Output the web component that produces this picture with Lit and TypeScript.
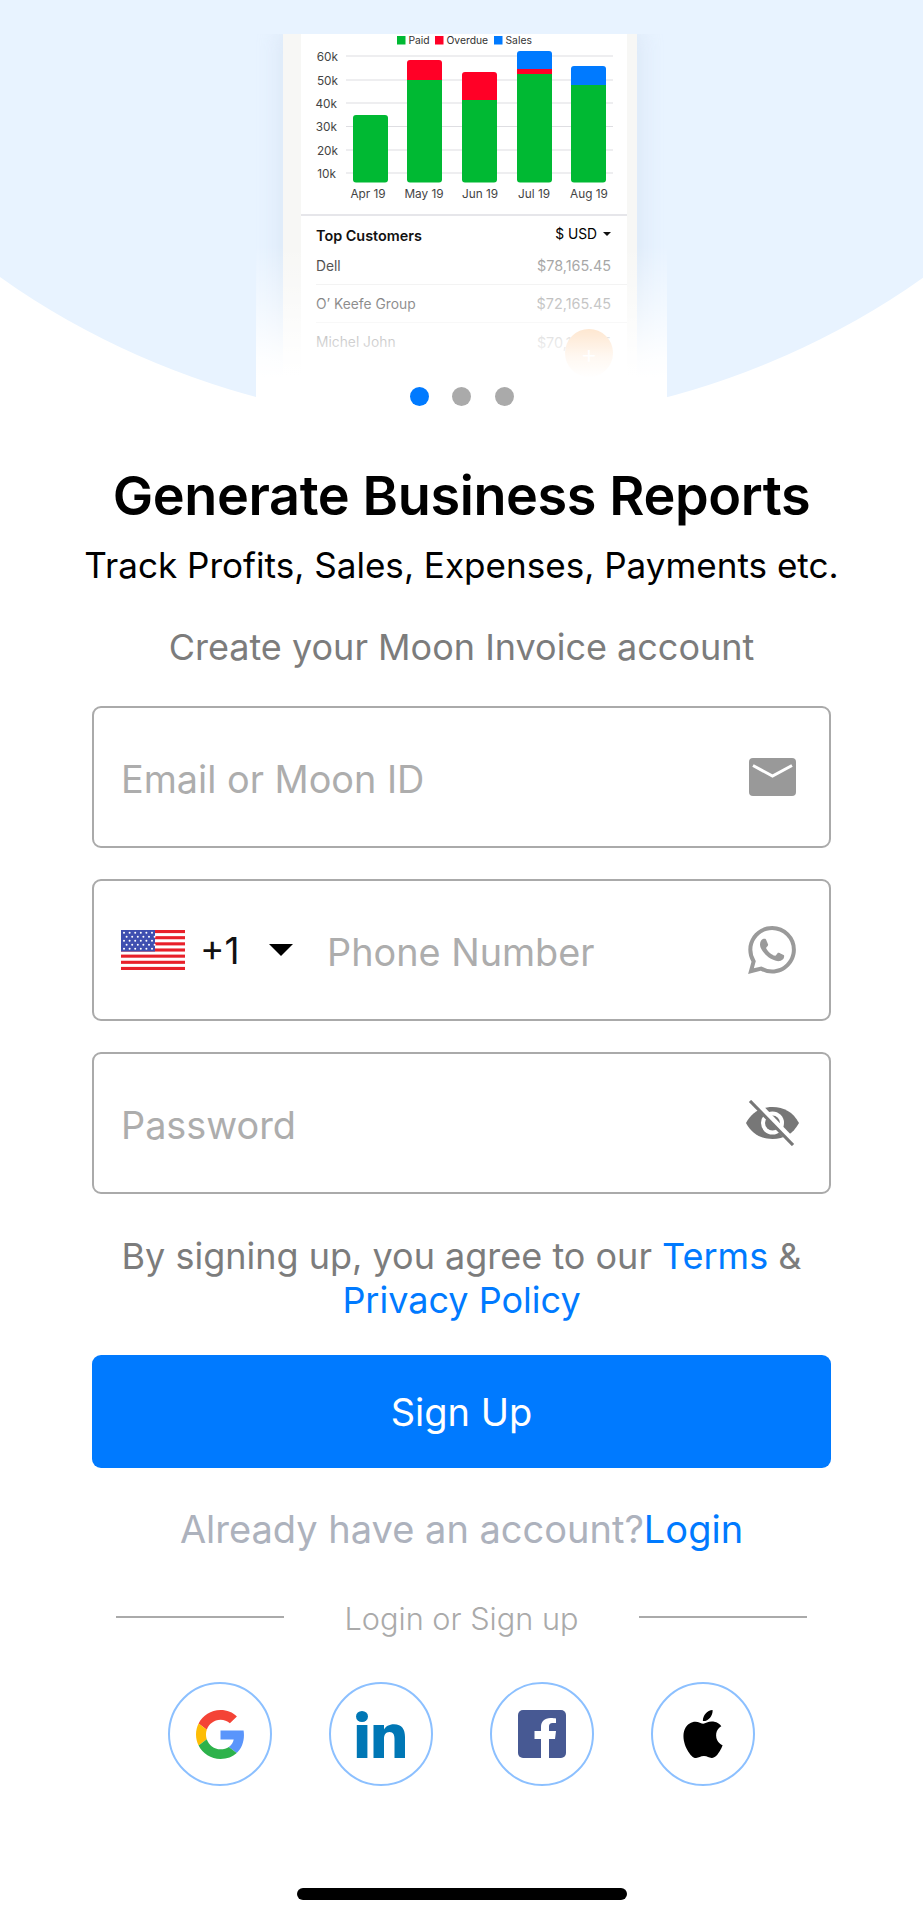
import { LitElement, html, css, svg } from "lit";
import { customElement } from "lit/decorators.js";

const BARS: [number, [number, string][]][] = [
  [353, [[115, "#00b933"]]],
  [407, [[60, "#ff0026"], [80, "#00b933"]]],
  [462, [[72, "#ff0026"], [100, "#00b933"]]],
  [517, [[51, "#007aff"], [69, "#ff0026"], [74, "#00b933"]]],
  [571, [[66, "#007aff"], [85, "#00b933"]]],
];
const GRID: [number, string, number][] = [
  [56, "60k", 338], [80, "50k", 338], [103, "40k", 337], [126.5, "30k", 337], [150, "20k", 338], [173, "10k", 336],
];
const MONTHS: [number, string][] = [[368, "Apr 19"], [424, "May 19"], [480, "Jun 19"], [534, "Jul 19"], [589, "Aug 19"]];
const LEGEND: [number, string, string][] = [[397, "#00b933", "Paid"], [435, "#ff0026", "Overdue"], [494, "#007aff", "Sales"]];

function chart() {
  return html`<svg class="chart" viewBox="301 34 326 181" width="326" height="181">
    ${LEGEND.map(([x, c, t]) => svg`<rect x=${x} y="36" width="8.5" height="8.5" fill=${c}></rect>
      <text x=${x + 11.5} y="44" class="lg">${t}</text>`)}
    ${GRID.map(([y, t, x]) => svg`<line x1="346" x2="613" y1=${y} y2=${y} stroke="#dedee2" stroke-width="1.2"></line>
      <text x=${x} y=${y + 4.5} text-anchor="end" class="ax">${t}</text>`)}
    ${BARS.map(([x, segs]) => {
      const top = segs[0][0];
      return svg`<clipPath id=${"c" + x}><rect x=${x} y=${top} width="35" height=${182.5 - top} rx="3"></rect></clipPath>
      <g clip-path=${`url(#c${x})`}>
        ${segs.map(([y, c], i) => {
          const end = i + 1 < segs.length ? segs[i + 1][0] : 183;
          return svg`<rect x=${x} y=${y} width="35" height=${end - y} fill=${c}></rect>`;
        })}
      </g>`;
    })}
    ${MONTHS.map(([x, t]) => svg`<text x=${x} y="197.5" text-anchor="middle" class="ax">${t}</text>`)}
  </svg>`;
}

const flag = html`<svg class="flag" viewBox="0 0 64 40" width="64" height="40">
  <rect width="64" height="40" fill="#fff"></rect>
  ${[0, 6.15, 12.3, 18.45, 24.6, 30.75, 36.9].map((y) => svg`<rect y=${y} width="64" height="3.1" fill="#e8202a"></rect>`)}
  <rect width="34" height="21.5" fill="#3f4fb0"></rect>
  ${[0, 1, 2, 3, 4].map((r) => [0, 1, 2, 3, 4, 5].map((c) => svg`<circle cx=${3 + c * 5.6 + (r % 2 ? 2.6 : 0)} cy=${2.8 + r * 4} r="1" fill="#fff"></circle>`))}
</svg>`;

const mail = html`<svg viewBox="0 0 47 38" width="47" height="38">
  <rect width="47" height="38" rx="4" fill="#999"></rect>
  <path d="M4 7.500 23.500 18 43 7.500" fill="none" stroke="#fff" stroke-width="3"></path>
</svg>`;

const whatsapp = html`<svg viewBox="0 0 24 24" width="48" height="48" fill="#9a9a9a">
  <path d="M17.472 14.382c-.297-.149-1.758-.867-2.03-.967-.273-.099-.471-.148-.67.15-.197.297-.767.966-.94 1.164-.173.199-.347.223-.644.075-.297-.15-1.255-.463-2.39-1.475-.883-.788-1.48-1.761-1.653-2.059-.173-.297-.018-.458.13-.606.134-.133.298-.347.446-.52.149-.174.198-.298.298-.497.099-.198.05-.371-.025-.52-.075-.149-.669-1.612-.916-2.207-.242-.579-.487-.5-.669-.51-.173-.008-.371-.01-.57-.01-.198 0-.52.074-.792.372-.272.297-1.04 1.016-1.04 2.479 0 1.462 1.065 2.875 1.213 3.074.149.198 2.096 3.2 5.077 4.487.709.306 1.262.489 1.694.625.712.227 1.36.195 1.871.118.571-.085 1.758-.719 2.006-1.413.248-.694.248-1.289.173-1.413-.074-.124-.272-.198-.57-.347m-5.421 7.403h-.004a9.87 9.87 0 01-5.031-1.378l-.361-.214-3.741.982.998-3.648-.235-.374a9.86 9.86 0 01-1.51-5.26c.001-5.45 4.436-9.884 9.888-9.884 2.64 0 5.122 1.03 6.988 2.898a9.825 9.825 0 012.893 6.994c-.003 5.45-4.437 9.884-9.885 9.884m8.413-18.297A11.815 11.815 0 0012.05 0C5.495 0 .16 5.335.157 11.892c0 2.096.547 4.142 1.588 5.945L.057 24l6.305-1.654a11.882 11.882 0 005.683 1.448h.005c6.554 0 11.89-5.335 11.893-11.893a11.821 11.821 0 00-3.48-8.413z"></path>
</svg>`;

const eye = html`<svg viewBox="0 0 53 46" width="53" height="46">
  <path d="M0 23C6 12 15 7 26.500 7S47 12 53 23C47 34 38 39 26.500 39S6 34 0 23Z" fill="#777"></path>
  <circle cx="26.500" cy="23" r="11.500" fill="#fff"></circle>
  <circle cx="26.500" cy="23" r="7.500" fill="#777"></circle>
  <path d="M6 -1 47 42" stroke="#fff" stroke-width="7"></path>
  <path d="M4 1 47 45" stroke="#777" stroke-width="3.200"></path>
</svg>`;

const google = html`<svg viewBox="0 0 48 48" width="49" height="49">
  <path fill="#f44336" d="M24 9.5c3.54 0 6.71 1.22 9.21 3.6l6.85-6.85C35.9 2.38 30.47 0 24 0 14.62 0 6.51 5.38 2.56 13.22l7.98 6.19C12.43 13.72 17.74 9.5 24 9.5z"></path>
  <path fill="#5a95fb" d="M46.98 24.55c0-1.57-.15-3.09-.38-4.55H24v9.02h12.94c-.58 2.96-2.26 5.48-4.78 7.18l7.73 6c4.51-4.18 7.09-10.36 7.09-17.65z"></path>
  <path fill="#fdbd05" d="M10.53 28.59c-.48-1.45-.76-2.99-.76-4.59s.27-3.14.76-4.59l-7.98-6.19C.92 16.46 0 20.12 0 24c0 3.88.92 7.54 2.56 10.78l7.97-6.19z"></path>
  <path fill="#2db24b" d="M24 48c6.48 0 11.93-2.13 15.89-5.81l-7.73-6c-2.15 1.45-4.92 2.3-8.16 2.3-6.26 0-11.57-4.22-13.47-9.91l-7.98 6.19C6.51 42.62 14.62 48 24 48z"></path>
</svg>`;

const linkedin = html`<svg class="shift" viewBox="0 0 49 47" width="49" height="47" fill="#0077b5">
  <ellipse cx="6" cy="5.500" rx="6" ry="5.500"></ellipse>
  <rect x="0.800" y="14" width="10.600" height="33"></rect>
  <path d="M17.500 14H28v4.500c1.500-2.700 5-5.200 10-5.200C46 13.300 49 18.500 49 26V47H38.500V28c0-4-1-7-5-7s-5.500 3-5.500 7V47H17.500Z"></path>
</svg>`;

const facebook = html`<svg viewBox="0 0 48 48" width="48" height="48">
  <rect width="48" height="48" rx="5" fill="#475993"></rect>
  <path d="M31 48V29h6l1-8h-7v-4.500c0-2.300 1-3.500 3.500-3.500H38V8.500C37 8.300 35 8 32.500 8 26.500 8 23 11.500 23 17v4h-6.500v8H23v19Z" fill="#fff"></path>
</svg>`;

const apple = html`<svg viewBox="0 0 24 24" width="48" height="48" fill="#000">
  <path d="M12.152 6.896c-.948 0-2.415-1.078-3.96-1.04-2.04.027-3.91 1.183-4.961 3.014-2.117 3.675-.546 9.103 1.519 12.09 1.013 1.454 2.208 3.09 3.792 3.039 1.52-.065 2.09-.987 3.935-.987 1.831 0 2.35.987 3.96.948 1.637-.026 2.676-1.48 3.676-2.948 1.156-1.688 1.636-3.325 1.662-3.415-.039-.013-3.182-1.221-3.22-4.857-.026-3.04 2.48-4.494 2.597-4.559-1.429-2.09-3.623-2.324-4.39-2.376-2-.156-3.675 1.09-4.61 1.09zM15.53 3.83c.843-1.012 1.4-2.427 1.245-3.83-1.207.052-2.662.805-3.532 1.818-.78.896-1.454 2.338-1.273 3.714 1.338.104 2.715-.688 3.559-1.701"></path>
</svg>`;

@customElement("app-root")
export class AppRoot extends LitElement {
  static styles = css`
    :host { display: block; width: 923px; height: 1920px; background: #fff; font-family: Inter, "Noto Sans", sans-serif; color: #000; overflow: hidden; position: relative; }
    * { box-sizing: border-box; }
    .hero { position: relative; height: 427px; overflow: hidden; }
    .sky { position: absolute; left: -338.5px; top: -1176px; width: 1600px; height: 1600px; border-radius: 50%; background: #e8f3ff; }
    .phone { position: absolute; left: 283px; top: 34px; width: 354px; height: 362px; background: #f7f7f5; padding: 0 10px 0 18px; box-shadow: 0 0 20px 4px rgba(190, 205, 225, .3); clip-path: inset(0 -40px 0 -40px); }
    .screen { background: #fff; height: 100%; display: flex; flex-direction: column; }
    .chart { display: block; flex: none; }
    .chart .lg { font-size: 10.3px; fill: #333; font-family: Inter, sans-serif; }
    .chart .ax { font-size: 11.8px; fill: #444; font-family: Inter, sans-serif; }
    .sep { height: 2px; background: #e6e6ea; flex: none; margin-top: -1px; }
    .customers { padding: 8px 0 0 15px; font-size: 13.8px; }
    .chead { display: flex; justify-content: space-between; align-items: center; height: 23px; padding-right: 16px; }
    .chead b { font-weight: 600; font-size: 14.4px; color: #111; }
    .usd { display: flex; align-items: center; gap: 6px; font-size: 13.8px; margin-top: -3px; }
    .usd i { width: 0; height: 0; border: 4px solid transparent; border-top: 4.5px solid #111; border-bottom: 0; }
    .row { display: flex; justify-content: space-between; align-items: center; height: 38px; padding-right: 16px; border-bottom: 1.5px solid #eee; color: #333; }
    .row span:last-child { color: #999; font-size: 14.4px; }
    .row:last-child { border: 0; }
    .fab { position: absolute; left: 282px; top: 295px; width: 48px; height: 48px; border-radius: 50%; background: #fdb977; color: #fff; display: flex; align-items: center; justify-content: center; font-size: 26px; font-weight: 300; }
    .fade { position: absolute; left: 256px; top: 245px; width: 411px; height: 151px; background: linear-gradient(to bottom, rgba(255,255,255,0) 0%, rgba(255,255,255,.45) 40%, rgba(255,255,255,.9) 74%, #fff 88%); }
    .fade2 { position: absolute; left: 256px; top: 396px; width: 411px; height: 31px; background: #fff; }
    .dots { position: absolute; left: 0; right: 0; top: 387px; display: flex; justify-content: center; gap: 24px; }
    .dots i { width: 19px; height: 19px; border-radius: 50%; background: #aaa; }
    .dots i:first-child { background: #007aff; margin-right: -1px; }
    .copy { text-align: center; display: flex; flex-direction: column; align-items: center; }
    h1 { margin: 36px 0 0; font-size: 54px; line-height: 66px; font-weight: 600; letter-spacing: -.4px; }
    .sub { font-size: 35.1px; line-height: 44px; margin-top: 14px; }
    .create { font-size: 36px; line-height: 44px; color: #7c7c7c; margin-top: 38px; }
    .form { margin: 37px 92px 0; display: flex; flex-direction: column; gap: 31px; }
    .field { height: 142px; border: 2px solid #aaa; border-radius: 9px; display: flex; align-items: center; padding: 0 33px 0 27px; font-size: 37.8px; color: #adadad; }
    .field .ph { flex: 1; padding-top: 4px; }
    .code { color: #111; margin-left: 15px; font-size: 37px; width: 69px; padding-top: 1px; }
    .flag { flex: none; }
    .caret { width: 0; height: 0; border-left: 12px solid transparent; border-right: 12px solid transparent; border-top: 12px solid #000; margin-right: 34px; flex: none; }
    .ic { flex: none; display: flex; }
    .ic.wide { margin-right: -3px; }
    .terms { text-align: center; font-size: 36px; line-height: 44px; color: #7c7c7c; margin-top: 40px; }
    a { color: #007aff; text-decoration: none; }
    .btn { margin: 33px 92px 0; height: 113px; background: #007aff; color: #fff; border-radius: 9px; display: flex; align-items: center; justify-content: center; font-size: 38px; }
    .have { text-align: center; font-size: 38px; line-height: 46px; color: #adb2bd; margin-top: 38px; }
    .or { display: flex; align-items: center; justify-content: space-between; margin: 45px 116px 0; font-size: 30.7px; font-weight: 300; color: #aaa; height: 40px; }
    .or span { padding-top: 3px; }
    .or i { width: 168px; height: 2px; background: #aaa; }
    .social { display: flex; justify-content: center; gap: 57px; margin-top: 45px; }
    .social div { width: 104px; height: 104px; border-radius: 50%; border: 2.5px solid #8cc0ff; display: flex; align-items: center; justify-content: center; }
    .shift { margin-left: -1px; }
    .home { position: absolute; left: 297px; top: 1888px; width: 330px; height: 12px; border-radius: 6px; background: #000; }
  `;

  render() {
    return html`
      <div class="hero">
        <div class="sky"></div>
        <div class="phone">
          <div class="screen">
            ${chart()}
            <div class="sep"></div>
            <div class="customers">
              <div class="chead"><b>Top Customers</b><span class="usd">$ USD <i></i></span></div>
              <div class="row"><span>Dell</span><span>$78,165.45</span></div>
              <div class="row"><span>O’ Keefe Group</span><span>$72,165.45</span></div>
              <div class="row"><span>Michel John</span><span>$70,165.45</span></div>
            </div>
          </div>
          <div class="fab">+</div>
        </div>
        <div class="fade"></div>
        <div class="fade2"></div>
        <div class="dots"><i></i><i></i><i></i></div>
      </div>
      <div class="copy">
        <h1>Generate Business Reports</h1>
        <div class="sub">Track Profits, Sales, Expenses, Payments etc.</div>
        <div class="create">Create your Moon Invoice account</div>
      </div>
      <div class="form">
        <div class="field"><span class="ph">Email or Moon ID</span><span class="ic">${mail}</span></div>
        <div class="field">${flag}<span class="code">+1</span><span class="caret"></span><span class="ph">Phone Number</span><span class="ic">${whatsapp}</span></div>
        <div class="field"><span class="ph">Password</span><span class="ic wide">${eye}</span></div>
      </div>
      <div class="terms">By signing up, you agree to our <a>Terms</a> &amp;<br /><a>Privacy Policy</a></div>
      <div class="btn">Sign Up</div>
      <div class="have">Already have an account?<a>Login</a></div>
      <div class="or"><i></i><span>Login or Sign up</span><i></i></div>
      <div class="social">
        <div>${google}</div><div>${linkedin}</div><div>${facebook}</div><div>${apple}</div>
      </div>
      <div class="home"></div>
    `;
  }
}
